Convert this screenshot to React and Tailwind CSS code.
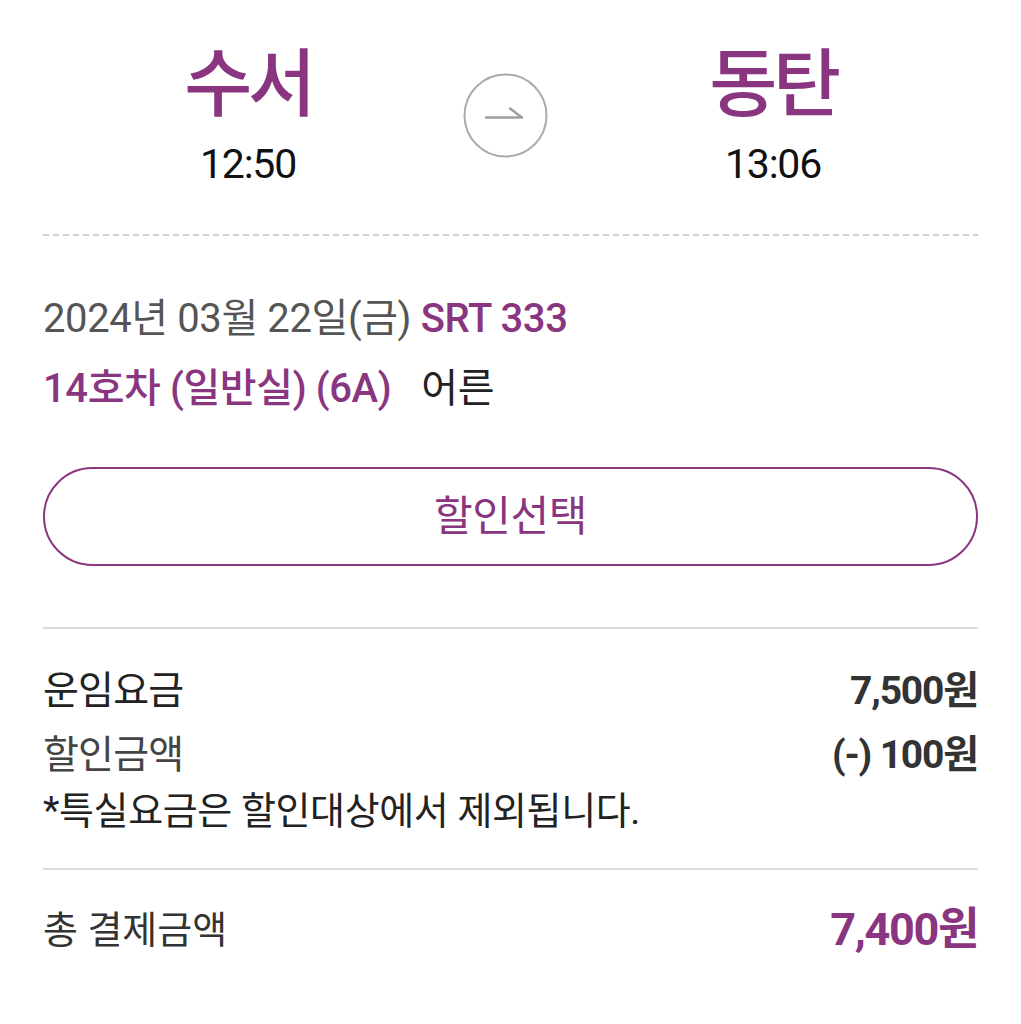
import React from "react";

const PURPLE = "text-[#8a3580]";

export default function App() {
  return (
    <div className="w-[1021px] h-[1024px] bg-white px-[43px] font-['Roboto','Noto_Sans_CJK_KR',sans-serif] overflow-hidden">
      {/* header */}
      <div className="grid grid-cols-[1fr_115px_1fr] pt-[48px]">
        <div className="flex flex-col items-center">
          <div className={`text-[74px] leading-none font-medium tracking-[-0.06em] ${PURPLE}`}>수서</div>
          <div className="mt-[22px] text-[41px] leading-none text-[#111] tracking-[-0.03em]">12:50</div>
        </div>
        <div className="flex justify-center pt-[25px] pr-[10px]">
          <svg width="85" height="85" viewBox="0 0 85 85" fill="none">
            <circle cx="42.5" cy="42.5" r="41" stroke="#ababab" strokeWidth="2" />
            <path d="M23 44.5 H59 L47 35.5" stroke="#9f9f9f" strokeWidth="2.5" strokeLinecap="round" strokeLinejoin="round" />
          </svg>
        </div>
        <div className="flex flex-col items-center">
          <div className={`text-[74px] leading-none font-medium tracking-[-0.06em] ${PURPLE}`}>동탄</div>
          <div className="mt-[22px] text-[41px] leading-none text-[#111] tracking-[-0.03em]">13:06</div>
        </div>
      </div>

      {/* dashed divider */}
      <div className="mt-[49px] h-[2px] bg-[repeating-linear-gradient(to_right,#d0d0d0_0_6px,transparent_6px_10px)]" />

      {/* train info */}
      <div className="mt-[61px] text-[40px] leading-[44px] tracking-[-0.01em]">
        <div className="text-[#555]">
          2024년 03월 22일(금) <span className={`font-medium ${PURPLE}`}>SRT 333</span>
        </div>
        <div className="mt-[26px] flex gap-[30px]">
          <span className={`font-medium ${PURPLE}`}>14호차 (일반실) (6A)</span>
          <span className="text-[#222]">어른</span>
        </div>
      </div>

      {/* discount button */}
      <div className="mt-[56px] h-[99px] rounded-full border-2 border-[#8a3580] flex items-center justify-center">
        <span className={`text-[42px] tracking-[-0.01em] ${PURPLE}`}>할인선택</span>
      </div>

      {/* divider */}
      <div className="mt-[61px] h-[2px] bg-[#dcdcdc]" />

      {/* fares */}
      <div className="pt-[40px] pb-[35px]">
        <div className="flex justify-between items-center h-[44px]">
          <span className="text-[39px] text-[#222] tracking-[-0.02em]">운임요금</span>
          <span className="text-[39px] font-bold text-[#333] tracking-[-0.03em]">7,500원</span>
        </div>
        <div className="mt-[20px] flex justify-between items-center h-[44px]">
          <span className="text-[39px] text-[#444] tracking-[-0.02em]">할인금액</span>
          <span className="text-[39px] font-bold text-[#333] tracking-[-0.03em]">(-) 100원</span>
        </div>
        <div className="mt-[12px] text-[38px] leading-[44px] text-[#222] tracking-[-0.01em]">*특실요금은 할인대상에서 제외됩니다.</div>
      </div>

      {/* divider */}
      <div className="h-[2px] bg-[#dcdcdc]" />

      {/* total */}
      <div className="mt-[36px] flex justify-between items-center h-[48px]">
        <span className="text-[38px] text-[#333]">총 결제금액</span>
        <span className={`text-[45px] font-bold tracking-[-0.03em] ${PURPLE}`}>7,400원</span>
      </div>
    </div>
  );
}
